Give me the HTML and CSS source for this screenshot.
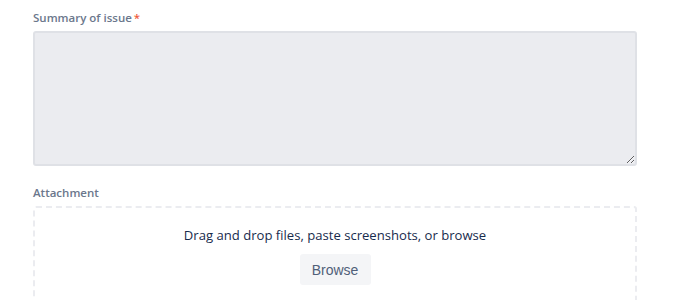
FILE: index.html
```html
<!DOCTYPE html>
<html>
<head>
<meta charset="utf-8">
<link rel="stylesheet" href="styles.css">
</head>
<body>
<div class="form">
  <div class="field">
    <label class="label">Summary of issue<span class="req">*</span></label>
    <textarea class="textarea"></textarea>
  </div>
  <div class="field">
    <label class="label">Attachment</label>
    <div class="dropzone">
      <div class="drop-text">Drag and drop files, paste screenshots, or browse</div>
      <button class="browse">Browse</button>
    </div>
  </div>
</div>
</body>
</html>
```
FILE: styles.css
```css
html, body {
  margin: 0;
  padding: 0;
  background: #ffffff;
  overflow: hidden;
}
body {
  font-family: "Open Sans", "Noto Sans", sans-serif;
  color: #172b4d;
}
.form {
  width: 604px;
  padding: 10px 0 0 33px;
  display: flex;
  flex-direction: column;
  gap: 19px;
}
.field {
  display: flex;
  flex-direction: column;
}
.label {
  font-size: 11.5px;
  font-weight: 600;
  color: #6b778c;
  line-height: 16px;
  margin-bottom: 5px;
}
.req {
  color: #ef5a3c;
  margin-left: 2px;
}
.textarea {
  box-sizing: border-box;
  width: 604px;
  height: 135px;
  margin: 0;
  background: #ebecf0;
  border: 2px solid #dfe1e6;
  border-radius: 3px;
  resize: vertical;
  display: block;
}
.dropzone {
  box-sizing: border-box;
  height: 100px;
  border: 2px dashed #ebecf0;
  border-radius: 3px;
  display: flex;
  flex-direction: column;
  align-items: center;
  padding-top: 17px;
  gap: 9px;
}
.drop-text {
  font-size: 13.1px;
  line-height: 20px;
  color: #172b4d;
}
.browse {
  font-family: "Liberation Sans", Arial, sans-serif;
  font-size: 14px;
  color: #505f79;
  background: #f4f5f7;
  border: none;
  border-radius: 3px;
  width: 71px;
  height: 31px;
  padding: 0;
}
```
